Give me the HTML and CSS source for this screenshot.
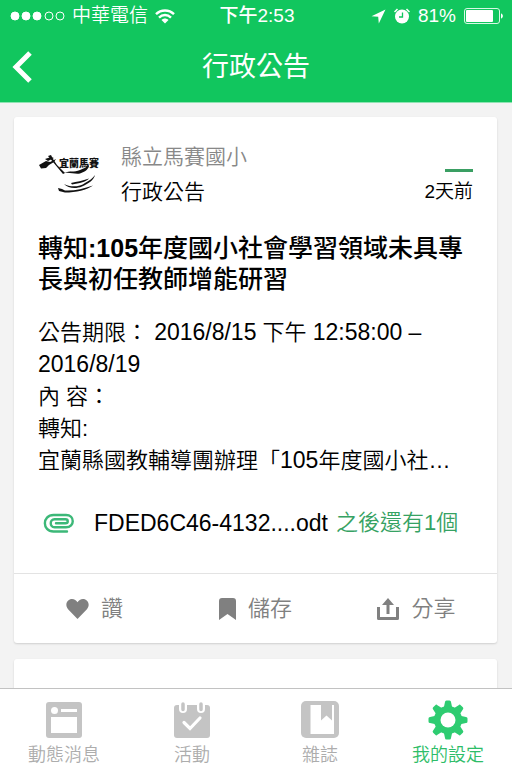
FILE: index.html
```html
<!DOCTYPE html>
<html lang="zh-Hant">
<head>
  <meta charset="UTF-8">
  <meta name="viewport" content="width=device-width, initial-scale=1.0">
  <title>行政公告</title>
  <link rel="stylesheet" href="styles.css">
</head>
<body>
  <header class="top">
    <div class="status">
      <div class="status-left">
        <svg width="55" height="12" viewBox="0 0 55 12" fill="#fff" stroke="#fff">
          <circle cx="5" cy="6" r="4"/>
          <circle cx="16" cy="6" r="4"/>
          <circle cx="27" cy="6" r="4"/>
          <circle cx="39" cy="6" r="4" fill="none"/>
          <circle cx="50" cy="6" r="4" fill="none"/>
        </svg>
        <span>中華電信</span>
        <svg width="20" height="15" viewBox="0 0 20 15" fill="none" stroke="#fff" stroke-width="2.400">
          <path d="M1 5.200C6 0.200 14 0.200 19 5.200"/>
          <path d="M4 8.600C7.500 5.200 12.500 5.200 16 8.600"/>
          <path d="M6.500 11C8.500 9 11.500 9 13.500 11L10 14.500Z" fill="#fff" stroke="none"/>
        </svg>
      </div>
      <div class="status-time">下午2:53</div>
      <div class="status-right">
        <svg width="15" height="15" viewBox="0 0 15 15" fill="#fff"><path d="M14.500 0.500L0.500 7.200L7.200 7.800L7.800 14.500Z"/></svg>
        <svg width="16" height="16" viewBox="0 0 16 16">
          <circle cx="8" cy="8.500" r="7" fill="#fff"/>
          <path d="M0.500 4L3.500 1M15.500 4L12.500 1" stroke="#fff" stroke-width="1.500"/>
          <path d="M8.500 4.500V9H5" fill="none" stroke="#11c65e" stroke-width="1.300"/>
        </svg>
        <span>81%</span>
        <svg width="40" height="16" viewBox="0 0 40 16">
          <rect x="0.500" y="0.500" width="35" height="15" rx="2.500" fill="none" stroke="#d8f8e5"/>
          <rect x="2" y="2" width="27" height="12" rx="1" fill="#fff"/>
          <path d="M37 5.500C39.500 6 39.500 10 37 10.500Z" fill="#fff"/>
        </svg>
      </div>
    </div>
    <nav class="navbar">
      <button class="back" aria-label="返回">
        <svg width="20" height="32" viewBox="0 0 20 32" fill="none" stroke="#fff" stroke-width="5"><path d="M18 2L4 16L18 30"/></svg>
      </button>
      <h1>行政公告</h1>
    </nav>
  </header>

  <main>
    <article class="card">
      <div class="card-body">
        <div class="card-head">
          <svg class="school-logo" width="62" height="70" viewBox="0 0 62 70" fill="#111">
            <path d="M1 26L8 22L12 23L18 20L16 23L11 26L8 29L3 29.500Z"/>
            <path d="M10 17L13 16L15 20L19 26L23 30L27 34L25 35L20 29L15 23Z"/>
            <path d="M7 20L13 18L16 19L10 22Z"/>
            <text x="21" y="28">宜蘭馬賽</text>
            <path d="M26 34C32 31.500 36 33.500 42 31C46 29.500 49 28 51 26C51 30 47 33 42 34.500C37 35.500 32 33 26 34Z"/>
            <path d="M33 44C39 42.500 44 42 51 39.500C49 42.500 41 44.500 34 45.500Z"/>
            <path d="M26 45C32 48.500 42 48 47 44C51 42 55 39 57 36C56 41 50 45 44 47.500C38 50 30 49.500 26 45Z"/>
            <path d="M20 49L24 50L27 51.500C36 52 45 50 55 46.500C49 51 38 53.500 27 53.500L21 52Z"/>
          </svg>
          <div class="author">
            <div class="school">縣立馬賽國小</div>
            <div>行政公告</div>
          </div>
          <div class="when"><time>2天前</time></div>
        </div>
        <h2>轉知<b>:105</b>年度國小社會學習領域未具專長與初任教師增能研習</h2>
        <div class="content">
          <p>公告期限： <span class="date">2016/8/15</span> 下午 <span class="date">12:58:00 –</span> <span class="date">2016/8/19</span></p>
          <p>內 容：</p>
          <p>轉知:</p>
          <p>宜蘭縣國教輔導團辦理「<span class="date">105</span>年度國小社…</p>
        </div>
        <div class="attachment">
          <svg width="32" height="20" viewBox="0 0 32 20" fill="none" stroke="#3cb878" stroke-width="2.400" stroke-linecap="round">
            <path d="M25 18.500H11.500C0 18.500 0 2 11.500 2H24C33 2 33 14.300 24 14.300H12.500C7.500 14.300 7.500 6.300 12.500 6.300H23.500C26.500 6.300 26.500 10.300 23.500 10.300H14"/>
          </svg>
          <a class="file" href="#">FDED6C46-4132....odt</a>
          <a class="more" href="#">之後還有1個</a>
        </div>
      </div>
      <div class="actions">
        <button>
          <svg width="23" height="24" viewBox="0 0 23 24" fill="#808080"><path d="M11.500 22L2.300 12.500C-2 7.500 1.500 2 6 2C8.500 2 10.300 3.300 11.500 5.200C12.700 3.300 14.500 2 17 2C21.500 2 25 7.500 20.700 12.500Z"/></svg>
          讚
        </button>
        <button>
          <svg width="17" height="24" viewBox="0 0 17 24" fill="#808080"><path d="M3 1H14Q17 1 17 4V23L8.500 17L0 23V4Q0 1 3 1Z"/></svg>
          儲存
        </button>
        <button>
          <svg width="22" height="24" viewBox="0 0 22 24"><path d="M1.500 10V21.500H20.500V10" fill="none" stroke="#808080" stroke-width="3" stroke-linejoin="round"/><path d="M11 1L17 8H12.500V17H9.500V8H5Z" fill="#808080"/></svg>
          分享
        </button>
      </div>
    </article>
    <article class="card next"></article>
  </main>

  <nav class="tabs">
    <a href="#">
      <svg width="40" height="40" viewBox="0 0 40 40">
        <rect x="2" y="2" width="36" height="36" rx="3" fill="#c4c4c4"/>
        <circle cx="10.500" cy="10.500" r="3.500" fill="#fff"/>
        <path d="M17 9H33V12H17ZM7 17H33V33H7Z" fill="#fff"/>
      </svg>
      動態消息
    </a>
    <a href="#">
      <svg width="40" height="40" viewBox="0 0 40 40">
        <rect x="2" y="5" width="36" height="33" rx="3" fill="#c4c4c4"/>
        <path d="M11 3V9M29 3V9" stroke="#fff" stroke-width="8" stroke-linecap="round"/>
        <path d="M11 4V9.500M29 4V9.500" stroke="#c4c4c4" stroke-width="3.500" stroke-linecap="round"/>
        <path d="M12 22.500L18 28.500L28 18" fill="none" stroke="#fff" stroke-width="3.200" stroke-linecap="round"/>
      </svg>
      活動
    </a>
    <a href="#">
      <svg width="40" height="40" viewBox="0 0 40 40">
        <rect x="1" y="1" width="38" height="37" rx="5" fill="#c4c4c4"/>
        <path d="M10.500 5H34V34H10.500Z" fill="#fff"/>
        <path d="M21 4H32V20.500L26.500 15.500L21 20.500Z" fill="#c4c4c4"/>
      </svg>
      雜誌
    </a>
    <a class="active" href="#">
      <svg width="40" height="40" viewBox="0 0 40 40">
        <g fill="#2ecc71">
          <circle cx="20" cy="20" r="14"/>
          <path id="teeth" d="M17 2Q17 0.500 18.500 0.500H21.500Q23 0.500 23 2L24.500 9H15.500ZM15.500 31H24.500L23 38Q23 39.500 21.500 39.500H18.500Q17 39.500 17 38Z"/>
          <use href="#teeth" transform="rotate(45 20 20)"/>
          <use href="#teeth" transform="rotate(90 20 20)"/>
          <use href="#teeth" transform="rotate(135 20 20)"/>
        </g>
        <circle cx="20" cy="20" r="7.500" fill="#fff"/>
      </svg>
      我的設定
    </a>
  </nav>
</body>
</html>
```
FILE: styles.css
```css
* {
  box-sizing: border-box;
}
body {
  margin: 0;
  height: 100vh;
  display: flex;
  flex-direction: column;
  font-family: "Liberation Sans", "Noto Sans CJK TC", sans-serif;
  font-weight: 350;
  color: #000;
  background: #f3f3f3;
}
svg {
  display: block;
  flex: none;
}
h1, h2, p {
  margin: 0;
}
a {
  color: inherit;
  text-decoration: none;
}
button {
  padding: 0;
  border: none;
  background: none;
  font: inherit;
  color: inherit;
  cursor: pointer;
}
.top {
  flex: none;
  background: #11c65e;
  color: #fff;
  border-bottom: 1px solid #8fe3b3;
}
.status {
  display: grid;
  grid-template-columns: 1fr auto 1fr;
  align-items: center;
  height: 32px;
  padding: 0 8px 0 10px;
  font-size: 19px;
  line-height: 32px;
}
.status-left,
.status-right {
  display: flex;
  align-items: center;
}
.status-left {
  gap: 7px;
}
.status-right {
  justify-content: flex-end;
  gap: 8px;
}
.status-time {
  font-weight: 500;
}
.navbar {
  display: grid;
  grid-template-columns: 1fr auto 1fr;
  align-items: center;
  height: 70px;
  padding: 0 12px;
}
.navbar h1 {
  font-size: 27px;
  line-height: 36px;
  font-weight: 400;
}
.back {
  justify-self: start;
}
main {
  flex: 1;
  min-height: 0;
  overflow: hidden;
  padding: 14px 15px 0 14px;
}
.card {
  margin-bottom: 16px;
  background: #fff;
  border-radius: 3px;
  box-shadow: 0 1px 2px rgba(0, 0, 0, 0.15);
}
.card.next {
  height: 200px;
}
.card-body {
  padding: 22px 24px 34px;
}
.card-head {
  display: flex;
  line-height: 35px;
  font-size: 21px;
}
.school-logo text {
  font-family: "Liberation Serif", "Noto Sans CJK TC", serif;
  font-size: 10px;
  font-weight: 900;
}
.author {
  flex: 1;
  margin-left: 21px;
}
.school {
  color: #888;
}
.when {
  display: flex;
  flex-direction: column;
  align-items: flex-end;
  justify-content: flex-end;
  font-size: 19px;
}
.when::before {
  content: "";
  width: 28px;
  height: 3px;
  margin-bottom: 2px;
  background: #3a9f63;
}
.card h2 {
  margin-top: 24px;
  font-size: 25px;
  line-height: 31px;
  font-weight: 500;
}
.content {
  margin-top: 22px;
  font-size: 22px;
  line-height: 32px;
}
.date,
.file {
  font-size: 23px;
}
.date {
  line-height: 1;
}
.attachment {
  display: flex;
  align-items: center;
  margin-top: 30px;
  padding-left: 4px;
  font-size: 22px;
  line-height: 32px;
}
.file {
  margin-left: 20px;
}
.more {
  margin-left: 8px;
  color: #36a263;
}
.actions {
  display: grid;
  grid-template-columns: 1fr 1fr 1fr;
  height: 70px;
  border-top: 1px solid #e3e3e3;
  font-size: 22px;
  line-height: 24px;
  color: #808080;
}
.actions button {
  display: flex;
  align-items: center;
  justify-content: center;
  gap: 12px;
}
.tabs {
  flex: none;
  display: grid;
  grid-template-columns: repeat(4, 1fr);
  height: 80px;
  padding-top: 11px;
  border-top: 1px solid #c2c2c2;
  background: #fff;
  font-size: 18px;
  line-height: 30px;
  color: #adadad;
}
.tabs a {
  display: flex;
  flex-direction: column;
  align-items: center;
}
.tabs .active {
  color: #2ebd68;
}
```
